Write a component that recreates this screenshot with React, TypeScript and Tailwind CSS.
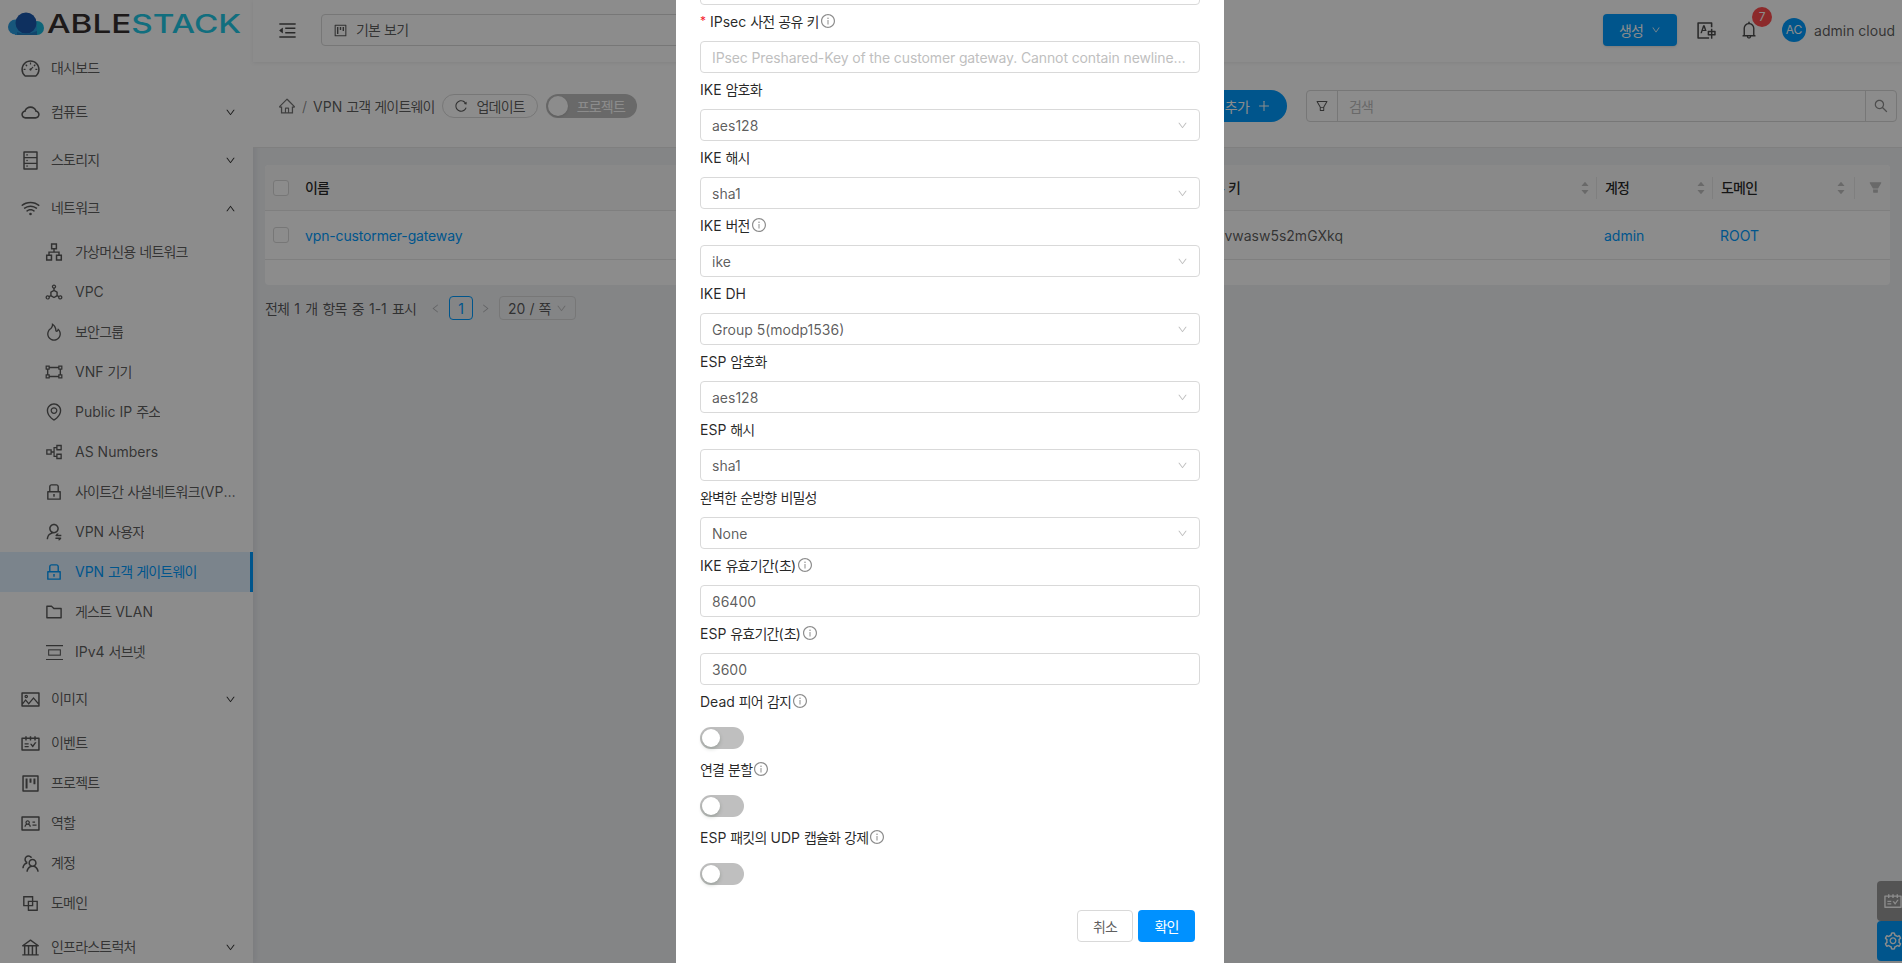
import type { ReactNode } from 'react'
import {
  AiOutlineDashboard, AiOutlineCloud, AiOutlineDatabase, AiOutlineWifi, AiOutlineApartment,
  AiOutlineDeploymentUnit, AiOutlineFire, AiOutlineGateway, AiOutlineEnvironment, AiOutlinePartition,
  AiOutlineLock, AiOutlineUserSwitch, AiOutlineFolder, AiOutlinePicture, AiOutlineSchedule,
  AiOutlineProject, AiOutlineIdcard, AiOutlineTeam, AiOutlineBlock, AiOutlineBank, AiOutlineDown,
  AiOutlineUp, AiOutlineLeft, AiOutlineRight, AiOutlineHome, AiOutlineReload, AiOutlinePlus,
  AiOutlineFilter, AiOutlineSearch, AiOutlineBell, AiOutlineSetting, AiOutlineTranslation,
  AiOutlineMenuFold, AiOutlineInfoCircle, AiFillCaretUp, AiFillCaretDown, AiFillFilter,
} from 'react-icons/ai'

// hangul runs sit tighter in the reference than Noto CJK sets them
function Ko({ text }: { text: string }) {
  return (
    <>
      {text.split(/([\uAC00-\uD7A3]+)/).map((part, i) =>
        i % 2 ? <span key={i} className="tracking-[-0.8px]">{part}</span> : part,
      )}
    </>
  )
}

function SubnetIcon({ size = 17 }: { size?: number }) {
  return (
    <svg width={size} height={size} viewBox="0 0 16 16" fill="none" stroke="currentColor" strokeWidth="1">
      <path d="M0 1.5h16M0 14.5h16" />
      <rect x="2.5" y="5.5" width="11" height="5" />
    </svg>
  )
}

const subItems = [
  { icon: <AiOutlineApartment size={20} />, label: '가상머신용 네트워크' },
  { icon: <AiOutlineDeploymentUnit size={20} />, label: 'VPC' },
  { icon: <AiOutlineFire size={20} />, label: '보안그룹' },
  { icon: <AiOutlineGateway size={20} />, label: 'VNF 기기' },
  { icon: <AiOutlineEnvironment size={20} />, label: 'Public IP 주소' },
  { icon: <AiOutlinePartition size={20} />, label: 'AS Numbers' },
  { icon: <AiOutlineLock size={20} />, label: '사이트간 사설네트워크(VPN) 연결' },
  { icon: <AiOutlineUserSwitch size={20} />, label: 'VPN 사용자' },
  { icon: <AiOutlineLock size={20} />, label: 'VPN 고객 게이트웨이', active: true },
  { icon: <AiOutlineFolder size={20} />, label: '게스트 VLAN' },
  { icon: <SubnetIcon />, label: 'IPv4 서브넷' },
]

function TopItem({ icon, label, open, more, className = '' }: { icon: ReactNode; label: string; open?: boolean; more?: boolean; className?: string }) {
  return (
    <div className={`flex items-center h-10 pl-[21px] pr-[17px] gap-3 text-[14px] text-black/65 ${className}`}>
      <span className="w-[18px] flex justify-center shrink-0 [&>svg]:shrink-0">{icon}</span>
      <span className="flex-1 truncate pb-[2px]"><Ko text={label} /></span>
      {more && (open ? <AiOutlineUp size={11} className="text-black/80" /> : <AiOutlineDown size={11} className="text-black/80" />)}
    </div>
  )
}

function Sidebar() {
  return (
    <aside className="w-[253px] shrink-0 h-full bg-white shadow-[2px_0_6px_rgba(0,21,41,0.08)] overflow-hidden">
      <div className="h-12 flex items-start pl-2 pt-[12px] gap-[2px]">
        <svg width="37" height="24" viewBox="0 0 37 24" className="shrink-0">
          <circle cx="7.5" cy="15" r="7.5" fill="#2a9de0" />
          <circle cx="29" cy="16" r="7" fill="#1bb8dc" />
          <rect x="7" y="12" width="22" height="11" fill="#2a9de0" />
          <circle cx="18" cy="11" r="10.5" fill="#1a58ad" />
          <path d="M9 20q9 4 20-1l0 4H9z" fill="#1f7fc4" />
        </svg>
        <div className="text-[25px] leading-[24px] font-medium origin-left scale-x-[1.33] whitespace-nowrap text-[#352f2f]">
          ABLE<span className="text-[#1fc8e6]">STACK</span>
        </div>
      </div>
      <TopItem icon={<AiOutlineDashboard size={21} />} label="대시보드" />
      <TopItem className="mt-1" icon={<AiOutlineCloud size={21} />} label="컴퓨트" more />
      <TopItem className="mt-2" icon={<AiOutlineDatabase size={21} />} label="스토리지" more />
      <TopItem className="mt-2" icon={<AiOutlineWifi size={21} />} label="네트워크" more open />
      <div className="mt-1">
        {subItems.map(item => (
          <div
            key={item.label}
            className={`flex items-center h-10 pl-[46px] pr-[14px] gap-[13px] text-[14px] ${item.active ? 'bg-[#e0f0ff] text-[#009cff] border-r-[3px] border-[#009cff]' : 'text-black/65'}`}
          >
            <span className="w-4 flex justify-center shrink-0 [&>svg]:shrink-0">{item.icon}</span>
            <span className="truncate pb-[2px]"><Ko text={item.label} /></span>
          </div>
        ))}
      </div>
      <TopItem className="mt-[7px]" icon={<AiOutlinePicture size={21} />} label="이미지" more />
      <TopItem className="mt-1" icon={<AiOutlineSchedule size={21} />} label="이벤트" />
      <TopItem icon={<AiOutlineProject size={21} />} label="프로젝트" />
      <TopItem icon={<AiOutlineIdcard size={21} />} label="역할" />
      <TopItem icon={<AiOutlineTeam size={21} />} label="계정" />
      <TopItem icon={<AiOutlineBlock size={21} />} label="도메인" />
      <TopItem className="mt-1" icon={<AiOutlineBank size={21} />} label="인프라스트럭처" more />
    </aside>
  )
}

function Header() {
  return (
    <header className="h-[62px] shrink-0 bg-white shadow-[0_1px_4px_rgba(0,21,41,0.08)] flex items-center pb-[2px] pl-[24px] pr-[7px] relative">
      <AiOutlineMenuFold size={21} className="text-black/70" />
      <div className="ml-[23px] w-[620px] h-8 border border-[#d9d9d9] rounded-[4px] flex items-center px-[11px] gap-2 text-[14px] text-black/65">
        <AiOutlineProject size={15} />
        <span className="pb-[2px]"><Ko text="기본 보기" /></span>
      </div>
      <div className="ml-auto flex items-center">
        <button className="w-[74px] h-8 rounded-[4px] bg-[#009cff] text-white text-[14px] flex items-center justify-center gap-2 shadow-sm">
          <Ko text="생성" /> <AiOutlineDown size={10} />
        </button>
        <AiOutlineTranslation size={21} className="ml-[19px] text-black/70" />
        <div className="relative ml-[22px]">
          <AiOutlineBell size={20} className="text-black/70" />
          <span className="absolute -top-[13px] left-[13px] w-5 h-5 rounded-full bg-[#ff4d4f] text-white text-[12px] flex items-center justify-center">7</span>
        </div>
        <div className="ml-[23px] w-6 h-6 rounded-full bg-[#009cff] text-white text-[12px] flex items-center justify-center">AC</div>
        <span className="ml-2 text-[14px] text-black/65 whitespace-nowrap">admin cloud</span>
      </div>
    </header>
  )
}

function Toolbar() {
  return (
    <div className="h-[86px] shrink-0 bg-white border-b border-[#e8e8e8] flex items-center pt-[3px] pl-[25px] pr-[5px]">
      <AiOutlineHome size={18} className="text-black/55" />
      <span className="mx-[6px] text-[14px] text-black/45">/</span>
      <span className="text-[14px] text-black/65 whitespace-nowrap"><Ko text="VPN 고객 게이트웨이" /></span>
      <button className="ml-[7px] w-[96px] h-6 rounded-full border border-[#d9d9d9] flex items-center justify-center gap-2 text-[14px] text-black/65">
        <AiOutlineReload size={14} /> <Ko text="업데이트" />
      </button>
      <div className="ml-[8px] w-[91px] h-6 rounded-full bg-[#bfbfbf] flex items-center pl-[2px] gap-[9px] text-[14px] text-white">
        <span className="w-5 h-5 rounded-full bg-white shadow-sm" />
        <Ko text="프로젝트" />
      </div>
      <button className="ml-auto w-[120px] h-8 rounded-full bg-[#009cff] text-white text-[14px] flex items-center justify-end pr-4 gap-2">
        <Ko text="추가" /> <AiOutlinePlus size={14} />
      </button>
      <div className="ml-[19px] w-[591px] h-8 border border-[#d9d9d9] rounded-[4px] flex items-center text-[14px] text-[#bfbfbf]">
        <span className="w-[31px] h-full border-r border-[#d9d9d9] flex items-center justify-center text-black/65 shrink-0">
          <AiOutlineFilter size={14} />
        </span>
        <span className="flex-1 pl-[11px]"><Ko text="검색" /></span>
        <span className="w-[31px] h-full border-l border-[#d9d9d9] flex items-center justify-center text-black/45 shrink-0">
          <AiOutlineSearch size={16} />
        </span>
      </div>
    </div>
  )
}

function Sort() {
  return (
    <span className="flex flex-col text-[#bfbfbf] leading-none">
      <AiFillCaretUp size={10} className="-mb-[2px]" />
      <AiFillCaretDown size={10} />
    </span>
  )
}

function Check() {
  return <span className="w-4 h-4 rounded-[3px] border border-[#d9d9d9] bg-white shrink-0" />
}

function Table() {
  return (
    <div className="mx-3 mt-[17px] h-[120px] w-[1625px] bg-white rounded-[4px] text-[14px] shrink-0">
      <div className="flex items-center h-[46px] bg-[#fafafa] border-b border-[#e8e8e8] rounded-t-[4px] font-medium text-black/85">
        <div className="w-[735px] flex items-center pl-[8px] gap-4 shrink-0"><Check /><Ko text="이름" /></div>
        <div className="w-[596px] flex items-center shrink-0">
          <span className="w-[240px] text-right whitespace-nowrap"><Ko text="IPsec 사전 공유 키" /></span>
          <span className="ml-auto mr-[6px]"><Sort /></span>
        </div>
        <div className="w-[116px] h-[22px] border-l border-[#e8e8e8] flex items-center justify-between pl-2 pr-[6px] shrink-0"><span><Ko text="계정" /></span> <Sort /></div>
        <div className="w-[142px] h-[22px] border-l border-[#e8e8e8] flex items-center justify-between pl-2 pr-[8px] shrink-0"><span><Ko text="도메인" /></span> <Sort /></div>
        <div className="flex-1 h-[22px] border-l border-[#e8e8e8] flex items-center justify-end pr-[7px] text-[#bfbfbf]"><AiFillFilter size={15} /></div>
      </div>
      <div className="flex items-center h-[49px] border-b border-[#e8e8e8] text-black/65">
        <div className="w-[735px] flex items-center pl-[8px] gap-4 shrink-0 text-[#009cff] tracking-[-0.15px]"><Check />vpn-custormer-gateway</div>
        <div className="w-[596px] shrink-0">
          <span className="block w-[343px] text-right whitespace-nowrap">SxT2fh97vwasw5s2mGXkq</span>
        </div>
        <div className="w-[116px] pl-2 text-[#009cff] shrink-0">admin</div>
        <div className="w-[142px] pl-2 text-[#009cff] shrink-0">ROOT</div>
      </div>
    </div>
  )
}

function Pagination() {
  return (
    <div className="mx-3 mt-[11px] flex items-center text-[14px] text-black/65 h-6">
      <span className="whitespace-nowrap [word-spacing:1.2px]"><Ko text="전체 1 개 항목 중 1-1 표시" /></span>
      <AiOutlineLeft size={11} className="ml-[14px] text-black/25" />
      <span className="ml-[8px] w-6 h-6 rounded-[4px] border border-[#009cff] text-[#009cff] flex items-center justify-center">1</span>
      <AiOutlineRight size={11} className="ml-[7px] text-black/25" />
      <div className="ml-[8px] w-[77px] h-6 border border-[#d9d9d9] rounded-[4px] flex items-center justify-between pl-2 pr-2">
        <span><Ko text="20 / 쪽" /></span> <AiOutlineDown size={11} className="text-[#bfbfbf]" />
      </div>
    </div>
  )
}

function Label({ text, required, info = true }: { text: string; required?: boolean; info?: boolean }) {
  return (
    <div className="h-9 flex items-center pb-[4px] text-[14px] text-black/85 whitespace-nowrap">
      {required && <span className="text-[#f5222d] mr-1 text-[12px]">*</span>}
      <span><Ko text={text} /></span>
      {info && <AiOutlineInfoCircle size={16} className="ml-px text-black/45" />}
    </div>
  )
}

function SelectBox({ value }: { value: string }) {
  return (
    <div className="h-8 border border-[#d9d9d9] rounded-[4px] flex items-center justify-between pl-[11px] pr-[11px] text-[14px] text-black/65">
      {value}
      <AiOutlineDown size={11} className="text-[#bfbfbf]" />
    </div>
  )
}

function InputBox({ value, placeholder }: { value?: string; placeholder?: string }) {
  return (
    <div className={`h-8 border border-[#d9d9d9] rounded-[4px] flex items-center px-[11px] text-[14px] ${value ? 'text-black/65' : 'text-[#bfbfbf] tracking-[-0.12px]'}`}>
      <span className="truncate">{value ?? placeholder}</span>
    </div>
  )
}

function Toggle() {
  return (
    <div className="h-8 pt-[6px]">
      <div className="w-11 h-[22px] rounded-full bg-[#bfbfbf] flex items-center pl-[2px]">
        <span className="w-[18px] h-[18px] rounded-full bg-white shadow-[0_2px_4px_rgba(0,35,11,0.2)]" />
      </div>
    </div>
  )
}

const selects = [
  { label: 'IKE 암호화', value: 'aes128' },
  { label: 'IKE 해시', value: 'sha1' },
  { label: 'IKE 버전', value: 'ike', info: true },
  { label: 'IKE DH', value: 'Group 5(modp1536)' },
  { label: 'ESP 암호화', value: 'aes128' },
  { label: 'ESP 해시', value: 'sha1' },
  { label: '완벽한 순방향 비밀성', value: 'None' },
]

function VpnModal() {
  return (
    <div className="fixed top-0 bottom-0 left-[676px] w-[548px] bg-white overflow-hidden px-6">
      <div className="h-8 -mt-[27px] border border-[#d9d9d9] rounded-[4px]" />
      <Label text="IPsec 사전 공유 키" required />
      <InputBox placeholder="IPsec Preshared-Key of the customer gateway. Cannot contain newline or double quotes." />
      {selects.map(s => (
        <div key={s.label}>
          <Label text={s.label} info={!!s.info} />
          <SelectBox value={s.value} />
        </div>
      ))}
      <Label text="IKE 유효기간(초)" />
      <InputBox value="86400" />
      <Label text="ESP 유효기간(초)" />
      <InputBox value="3600" />
      <Label text="Dead 피어 감지" />
      <Toggle />
      <Label text="연결 분할" />
      <Toggle />
      <Label text="ESP 패킷의 UDP 캡슐화 강제" />
      <Toggle />
      <div className="mt-[21px] pr-[5px] flex justify-end gap-[5px] text-[14px]">
        <button className="w-14 h-8 rounded-[4px] border border-[#d9d9d9] text-black/65"><Ko text="취소" /></button>
        <button className="w-[57px] h-8 rounded-[4px] bg-[#0091ff] text-white"><Ko text="확인" /></button>
      </div>
    </div>
  )
}

export default function App() {
  return (
    <div className="relative flex h-screen overflow-hidden bg-[#f0f2f5] font-['Inter','Noto_Sans_CJK_KR',sans-serif]">
      <Sidebar />
      <main className="flex-1 min-w-0 flex flex-col">
        <Header />
        <Toolbar />
        <Table />
        <Pagination />
      </main>
      <div className="absolute right-0 bottom-[2px] w-[25px] text-white">
        <div className="h-10 bg-[#999] rounded-l-[4px] flex items-center pl-[6px]"><AiOutlineSchedule size={20} className="shrink-0" /></div>
        <div className="h-10 bg-[#009cff] rounded-l-[4px] flex items-center pl-[6px]"><AiOutlineSetting size={20} className="shrink-0" /></div>
      </div>
      <div className="fixed inset-0 bg-black/45" />
      <VpnModal />
    </div>
  )
}
